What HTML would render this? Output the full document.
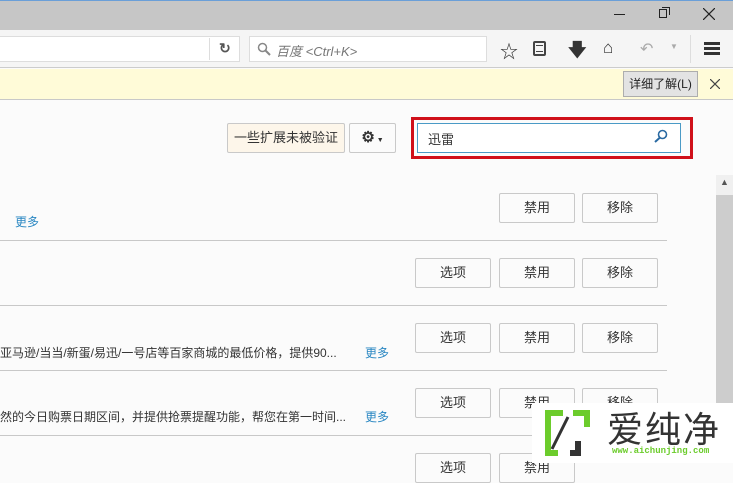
<!DOCTYPE html>
<html><head><meta charset="utf-8"><style>
*{margin:0;padding:0;box-sizing:border-box}
body{width:733px;height:463px;overflow:hidden;background:#fbfbfb;font-family:"Liberation Sans","Noto Sans CJK SC",sans-serif;font-size:13px;color:#333;position:relative}
.a{position:absolute}
.btn{position:absolute;width:76px;height:30px;border:1px solid #c9c9c9;border-radius:2px;background:#fbfbfb;text-align:center;line-height:28px;font-size:13px;color:#333}
.sep{position:absolute;left:0;width:667px;height:1px;background:#c8c8c8}
.more{position:absolute;color:#2a87c2;font-size:12px}
.desc{position:absolute;left:0;font-size:12px;color:#333;white-space:nowrap}
</style></head><body>
<div class="a" style="left:0;top:0;width:733px;height:30px;background:#c6c6c6;border-top:1px solid #6a9fd8"></div>
<div class="a" style="left:614px;top:14px;width:11px;height:1px;background:#222"></div>
<div class="a" style="left:659px;top:9px;width:8px;height:9px;border:1px solid #222"></div>
<div class="a" style="left:662px;top:7px;width:8px;height:8px;border-top:1px solid #222;border-right:1px solid #222"></div>
<svg class="a" style="left:703px;top:8px" width="12" height="12"><path d="M0 0L12 12M12 0L0 12" stroke="#222" stroke-width="1.2"/></svg>
<div class="a" style="left:0;top:30px;width:733px;height:38px;background:#f5f5f5;border-bottom:1px solid #ccc"></div>
<div class="a" style="left:0;top:36px;width:240px;height:26px;background:#fff;border:1px solid #ddd;border-left:none"></div>
<div class="a" style="left:209px;top:38px;width:1px;height:22px;background:#ddd"></div>
<div class="a" style="left:219px;top:40px;font-size:14px;color:#555;font-weight:bold">↻</div>
<div class="a" style="left:249px;top:36px;width:238px;height:26px;background:#fff;border:1px solid #ddd"></div>
<svg class="a" style="left:257px;top:42px" width="14" height="14"><circle cx="5.5" cy="5.5" r="4" fill="none" stroke="#888" stroke-width="1.5"/><path d="M8.5 8.5L13 13" stroke="#888" stroke-width="2"/></svg>
<div class="a" style="left:276px;top:41px;font-size:13px;color:#777;font-style:italic">百度 &lt;Ctrl+K&gt;</div>
<div class="a" style="left:500px;top:38px;font-size:18px;color:#333">☆</div>
<div class="a" style="left:533px;top:41px;width:13px;height:15px;border:2px solid #444;border-radius:2px"></div>
<div class="a" style="left:536px;top:45px;width:7px;height:7px;border-top:1px solid #444;border-bottom:1px solid #444"></div>
<div class="a" style="left:568px;top:38px;font-size:18px;color:#333;font-weight:bold">🡇</div>
<div class="a" style="left:603px;top:38px;font-size:17px;color:#333">⌂</div>
<div class="a" style="left:640px;top:39px;font-size:16px;color:#aaa">↶</div>
<div class="a" style="left:670px;top:42px;font-size:8px;color:#aaa">▼</div>
<div class="a" style="left:690px;top:35px;width:1px;height:28px;background:#ddd"></div>
<div class="a" style="left:704px;top:42px;width:16px;height:3px;background:#333;box-shadow:0 5px 0 #333,0 10px 0 #333"></div>
<div class="a" style="left:0;top:69px;width:733px;height:31px;background:#fffbd8;border-bottom:1px solid #c8c8c8"></div>
<div class="a" style="left:623px;top:71px;width:75px;height:26px;background:#e3e3e3;border:1px solid #adadad;font-size:12px;line-height:24px;text-align:center;color:#222">详细了解(L)</div>
<svg class="a" style="left:710px;top:79px" width="10" height="10"><path d="M0 0L10 10M10 0L0 10" stroke="#444" stroke-width="1.2"/></svg>
<div class="btn" style="left:227px;top:123px;width:118px;background:#fdf6ea;height:30px">一些扩展未被验证</div>
<div class="btn" style="left:349px;top:123px;width:47px;height:30px"><b style="font-size:15px">⚙</b><span style="font-size:7px"> ▼</span></div>
<div class="a" style="left:411px;top:117px;width:282px;height:42px;border:3px solid #d0101a"></div>
<div class="a" style="left:417px;top:123px;width:264px;height:30px;background:#fff;border:1px solid #4a9ac6"></div>
<div class="a" style="left:428px;top:129px;font-size:13px">迅雷</div>
<svg class="a" style="left:654px;top:129px" width="14" height="14"><circle cx="8.5" cy="5.5" r="4" fill="none" stroke="#2a6aa2" stroke-width="1.6"/><path d="M6 8.5L1 13" stroke="#2a6aa2" stroke-width="2"/></svg>
<div class="a" style="left:716px;top:175px;width:17px;height:288px;background:#f0f0f0"></div>
<div class="a" style="left:716px;top:195px;width:17px;height:268px;background:#cdcdcd"></div>
<div class="a" style="left:720px;top:177px;font-size:9px;color:#555">▲</div>
<div class="btn" style="left:499px;top:193px">禁用</div><div class="btn" style="left:582px;top:193px">移除</div>
<div class="more" style="left:15px;top:213px">更多</div>
<div class="sep" style="top:240px"></div>
<div class="btn" style="left:415px;top:258px">选项</div><div class="btn" style="left:499px;top:258px">禁用</div><div class="btn" style="left:582px;top:258px">移除</div>
<div class="sep" style="top:305px"></div>
<div class="desc" style="top:344px">亚马逊/当当/新蛋/易迅/一号店等百家商城的最低价格，提供90...</div>
<div class="more" style="left:365px;top:344px">更多</div>
<div class="btn" style="left:415px;top:323px">选项</div><div class="btn" style="left:499px;top:323px">禁用</div><div class="btn" style="left:582px;top:323px">移除</div>
<div class="sep" style="top:370px"></div>
<div class="desc" style="top:408px">然的今日购票日期区间，并提供抢票提醒功能，帮您在第一时间...</div>
<div class="more" style="left:365px;top:408px">更多</div>
<div class="btn" style="left:415px;top:388px">选项</div><div class="btn" style="left:499px;top:388px">禁用</div><div class="btn" style="left:582px;top:388px">移除</div>
<div class="sep" style="top:435px"></div>
<div class="btn" style="left:415px;top:453px">选项</div><div class="btn" style="left:499px;top:453px">禁用</div>
<div class="a" style="left:532px;top:403px;width:201px;height:60px;background:#fff"></div>
<svg class="a" style="left:543px;top:409px" width="52" height="50"><path d="M20 4H5v40h10" fill="none" stroke="#6ccc2c" stroke-width="6"/><path d="M30 4h14v14" fill="none" stroke="#6ccc2c" stroke-width="6"/><path d="M35 32v12h-8" fill="none" stroke="#333" stroke-width="6"/><path d="M9 40L25 8" stroke="#333" stroke-width="3"/></svg>
<div class="a" style="left:607px;top:407px;font-size:36px;line-height:40px;color:#333;letter-spacing:2px;font-family:'Noto Sans CJK SC',sans-serif">爱纯净</div>
<div class="a" style="left:612px;top:446px;font-size:9px;color:#6ccc2c;font-family:'Liberation Mono',monospace;font-weight:bold">www.aichunjing.com</div>
</body></html>
